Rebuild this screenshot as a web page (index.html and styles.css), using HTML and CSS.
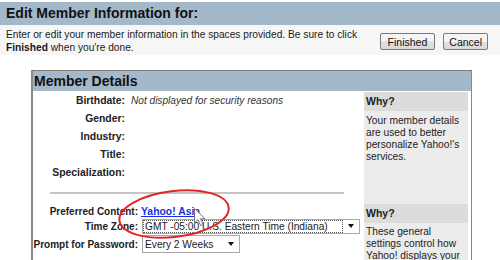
FILE: index.html
```html
<!DOCTYPE html>
<html>
<head>
<meta charset="utf-8">
<link rel="stylesheet" href="styles.css">
</head>
<body>
<div class="page">
  <div class="title-bar">Edit Member Information for:</div>
  <div class="intro">
    <p class="intro-text">Enter or edit your member information in the spaces provided. Be sure to click<br><b>Finished</b> when you're done.</p>
    <div class="buttons">
      <button class="btn btn-finished">Finished</button>
      <button class="btn">Cancel</button>
    </div>
  </div>
  <div class="details">
    <div class="details-head">Member Details</div>
    <div class="details-body">
      <div class="form">
        <div class="rows">
          <div class="row"><span class="lbl">Birthdate:</span><span class="val">Not displayed for security reasons</span></div>
          <div class="row"><span class="lbl">Gender:</span></div>
          <div class="row"><span class="lbl">Industry:</span></div>
          <div class="row"><span class="lbl">Title:</span></div>
          <div class="row"><span class="lbl">Specialization:</span></div>
        </div>
        <div class="rule"></div>
        <div class="rows2">
          <div class="row2 r-content"><span class="lbl2">Preferred Content:</span><a class="link" href="#">Yahoo! Asia</a></div>
          <div class="row2 r-tz"><span class="lbl2">Time Zone:</span><div class="select tz"><span class="sel-text">GMT -05:00 U.S. Eastern Time (Indiana)</span><span class="arrow"></span></div></div>
          <div class="row2 r-pw"><span class="lbl2">Prompt for Password:</span><div class="select pw"><span class="sel-text">Every 2 Weeks</span><span class="arrow"></span></div></div>
        </div>
      </div>
      <div class="side">
        <div class="why">Why?</div>
        <p class="why-text">Your member details are used to better personalize Yahoo!'s services.</p>
        <div class="why why2">Why?</div>
        <p class="why-text why-text2">These general settings control how Yahoo! displays your</p>
      </div>
    </div>
  </div>
  <svg class="ellipse" width="124" height="62" viewBox="0 0 124 62">
    <ellipse cx="61" cy="30" rx="55" ry="23" transform="rotate(-7 61 30)" fill="none" stroke="#e0262a" stroke-width="2"/>
  </svg>
  <svg class="cursor" width="14" height="22" viewBox="0 0 14 22">
    <path d="M1.5 1.5 L1.5 16 L5 12.6 L7.6 18.6 L10 17.6 L7.5 11.8 L12.2 11.8 Z" fill="#fff" stroke="#777" stroke-width="1" stroke-linejoin="round"/>
  </svg>
</div>
</body>
</html>
```
FILE: styles.css
```css
html, body {
  margin: 0;
  padding: 0;
  background: #fff;
}
.page {
  position: relative;
  width: 500px;
  height: 260px;
  overflow: hidden;
  font-family: "Liberation Sans", Arial, sans-serif;
  color: #1a1a1a;
}
.title-bar {
  margin-top: 2px;
  height: 23px;
  line-height: 23px;
  background: #a3b8c9;
  font-size: 14px;
  font-weight: bold;
  padding-left: 6px;
  color: #111;
}
.intro {
  display: flex;
  justify-content: space-between;
  align-items: flex-start;
  background: #f6f6f6;
  padding: 3px 12px 0 6px;
  height: 27px;
}
.intro-text {
  margin: 0;
  font-size: 10.2px;
  line-height: 13px;
  white-space: nowrap;
}
.buttons {
  display: flex;
  gap: 8px;
  margin-top: 5px;
}
.btn {
  font-family: "Liberation Sans", Arial, sans-serif;
  font-size: 10.5px;
  height: 17px;
  padding: 0 5px;
  border: 1px solid #7a7a7a;
  border-radius: 2px;
  background: linear-gradient(#f5f5f5 50%, #e2e2e2 50%, #d8d8d8);
  color: #111;
  white-space: nowrap;
}
.btn-finished {
  padding: 0 7px;
}
.details {
  margin: 15px 0 0 31px;
  width: 441px;
  height: 200px;
  border-top: 1px solid #7c7c7c;
  border-left: 2px solid #8a8a8a;
  border-right: 1px solid #8a8a8a;
  box-sizing: border-box;
}
.details-head {
  height: 20px;
  line-height: 20px;
  background: #a3b8c9;
  font-size: 14px;
  font-weight: bold;
  padding-left: 1px;
  color: #111;
}
.details-body {
  display: flex;
  justify-content: space-between;
}
.form {
  width: 331px;
}
.row {
  display: flex;
  height: 18px;
  align-items: center;
  font-size: 10.4px;
}
.lbl {
  width: 92px;
  text-align: right;
  font-weight: bold;
  color: #222;
}
.val {
  margin-left: 6px;
  font-style: italic;
  font-size: 10.1px;
  color: #333;
}
.rule {
  margin: 11px 0 0 17px;
  width: 294px;
  height: 2px;
  background: #c4c4c4;
}
.rows2 {
  padding-top: 11px;
}
.row2 {
  display: flex;
  align-items: center;
  font-size: 10px;
}
.r-content { height: 13px; }
.r-tz { height: 16px; }
.r-pw { height: 18px; margin-top: 1px; }
.lbl2 {
  display: flex;
  justify-content: flex-end;
  flex: 0 0 105px;
  width: 105px;
  white-space: nowrap;
  font-weight: bold;
  color: #222;
}
.link {
  margin-left: 3px;
  color: #1a2ee0;
  font-weight: bold;
  text-decoration: underline;
  font-size: 10.4px;
}
.select {
  display: flex;
  align-items: center;
  margin-left: 4px;
  border: 1px solid #a9a9a9;
  box-sizing: border-box;
  background: #fff;
  font-size: 10.2px;
}
.tz {
  width: 218px;
  height: 15px;
}
.tz .sel-text {
  flex: 1;
  outline: 1px dotted #555;
  margin: 1px;
  padding-left: 1px;
  line-height: 11px;
}
.pw {
  width: 98px;
  height: 18px;
}
.pw .sel-text {
  flex: 1;
  padding-left: 2px;
}
.sel-text {
  white-space: nowrap;
}
.arrow {
  width: 0;
  height: 0;
  border-left: 3.5px solid transparent;
  border-right: 3.5px solid transparent;
  border-top: 4px solid #111;
  margin: 0 5px 0 5px;
}
.side {
  width: 104px;
  margin: 1px 3px 0 0;
  background: #ececec;
  height: 180px;
}
.why {
  background: #dcdcdc;
  height: 19px;
  line-height: 19px;
  font-size: 10.5px;
  font-weight: bold;
  padding-left: 2px;
  color: #222;
}
.why2 {
  margin-top: 41px;
}
.why-text {
  margin: 4px 0 0 2px;
  font-size: 10.2px;
  line-height: 12px;
  color: #222;
}
.why-text2 {
  margin-top: 3px;
}
.ellipse {
  position: absolute;
  left: 113px;
  top: 184px;
}
.cursor {
  position: absolute;
  left: 193px;
  top: 207px;
}
```
